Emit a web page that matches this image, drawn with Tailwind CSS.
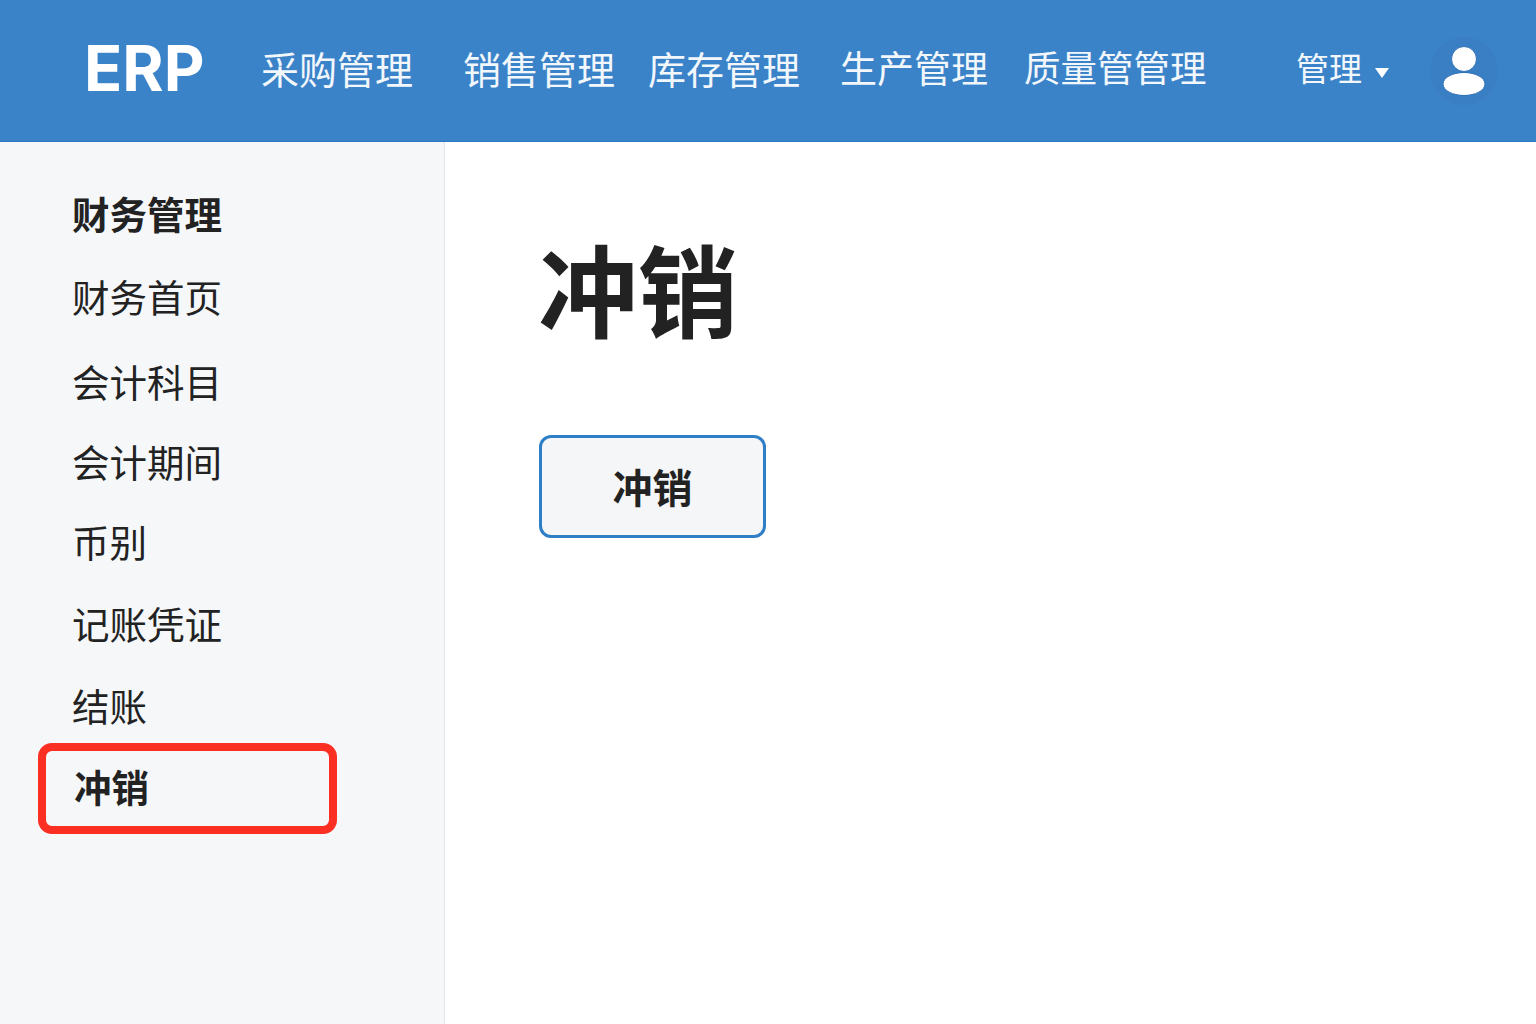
<!DOCTYPE html>
<html lang="zh-CN">
<head>
  <meta charset="UTF-8">
  <title>ERP</title>
  <script src="https://cdn.jsdelivr.net/npm/@tailwindcss/browser@4"></script>
</head>
<body class="h-[1024px] overflow-hidden bg-white text-[#222] font-['Inter','Noto_Sans_CJK_SC',sans-serif]">
  <header class="flex items-center h-[142px] bg-[#3b83c9] border-b border-[#2c78c4] text-white">
    <a class="ml-[84px] mb-[4px] w-[177px] text-[63px] leading-none font-bold">ERP</a>
    <nav class="flex items-center mb-[2px] text-[38px] leading-none text-[#f2f7fc]">
      <a class="w-[202px]">采购管理</a>
      <a class="w-[185px]">销售管理</a>
      <a class="w-[192px]">库存管理</a>
      <a class="w-[184px] text-[37px]">生产管理</a>
      <a class="w-[272px] text-[36.5px]">质量管管理</a>
    </nav>
    <a class="flex items-center mb-[2px] text-[33px] leading-none text-[#f2f7fc]">
      管理
      <svg class="ml-[13px] mt-[6px]" width="14" height="10" viewBox="0 0 14 10"><path d="M0 0h14L7 10z" fill="#fff"/></svg>
    </a>
    <div class="ml-[41px] flex items-center justify-center w-[68px] h-[68px] rounded-full bg-[#3a7fc3]">
      <svg width="44" height="50" viewBox="0 0 44 50">
        <circle cx="22" cy="13" r="12.5" fill="#fff" stroke="#2b6fb5"/>
        <ellipse cx="22" cy="38" rx="21" ry="11.5" fill="#fff" stroke="#2b6fb5"/>
      </svg>
    </div>
  </header>

  <div class="flex h-[882px]">
    <aside class="w-[445px] shrink-0 bg-[#f5f7f9] border-r border-[#e4e7ea] pl-[38px] pt-[49px] text-[37.5px] leading-[50px]">
      <h2 class="pl-[34px] font-bold">财务管理</h2>
      <ul>
        <li class="pl-[34px] mt-[33px]">财务首页</li>
        <li class="pl-[34px] mt-[35px]">会计科目</li>
        <li class="pl-[34px] mt-[30px]">会计期间</li>
        <li class="pl-[34px] mt-[30px]">币别</li>
        <li class="pl-[34px] mt-[32px]">记账凭证</li>
        <li class="pl-[34px] mt-[32px]">结账</li>
        <li class="mt-[10px] w-[299px] h-[91px] flex items-center pl-[28px] border-[8px] border-[#fb2f22] rounded-[14px] font-semibold">冲销</li>
      </ul>
    </aside>

    <main class="flex-1 pl-[94px] pt-[92px]">
      <h1 class="text-[100px] leading-[120px] font-semibold -ml-[1px]">冲销</h1>
      <button class="mt-[81px] w-[227px] h-[103px] pt-[5px] bg-[#f5f6f8] border-[3px] border-[#2f7fc6] rounded-[12px] text-[40px] font-semibold text-[#222]">冲销</button>
    </main>
  </div>
</body>
</html>
